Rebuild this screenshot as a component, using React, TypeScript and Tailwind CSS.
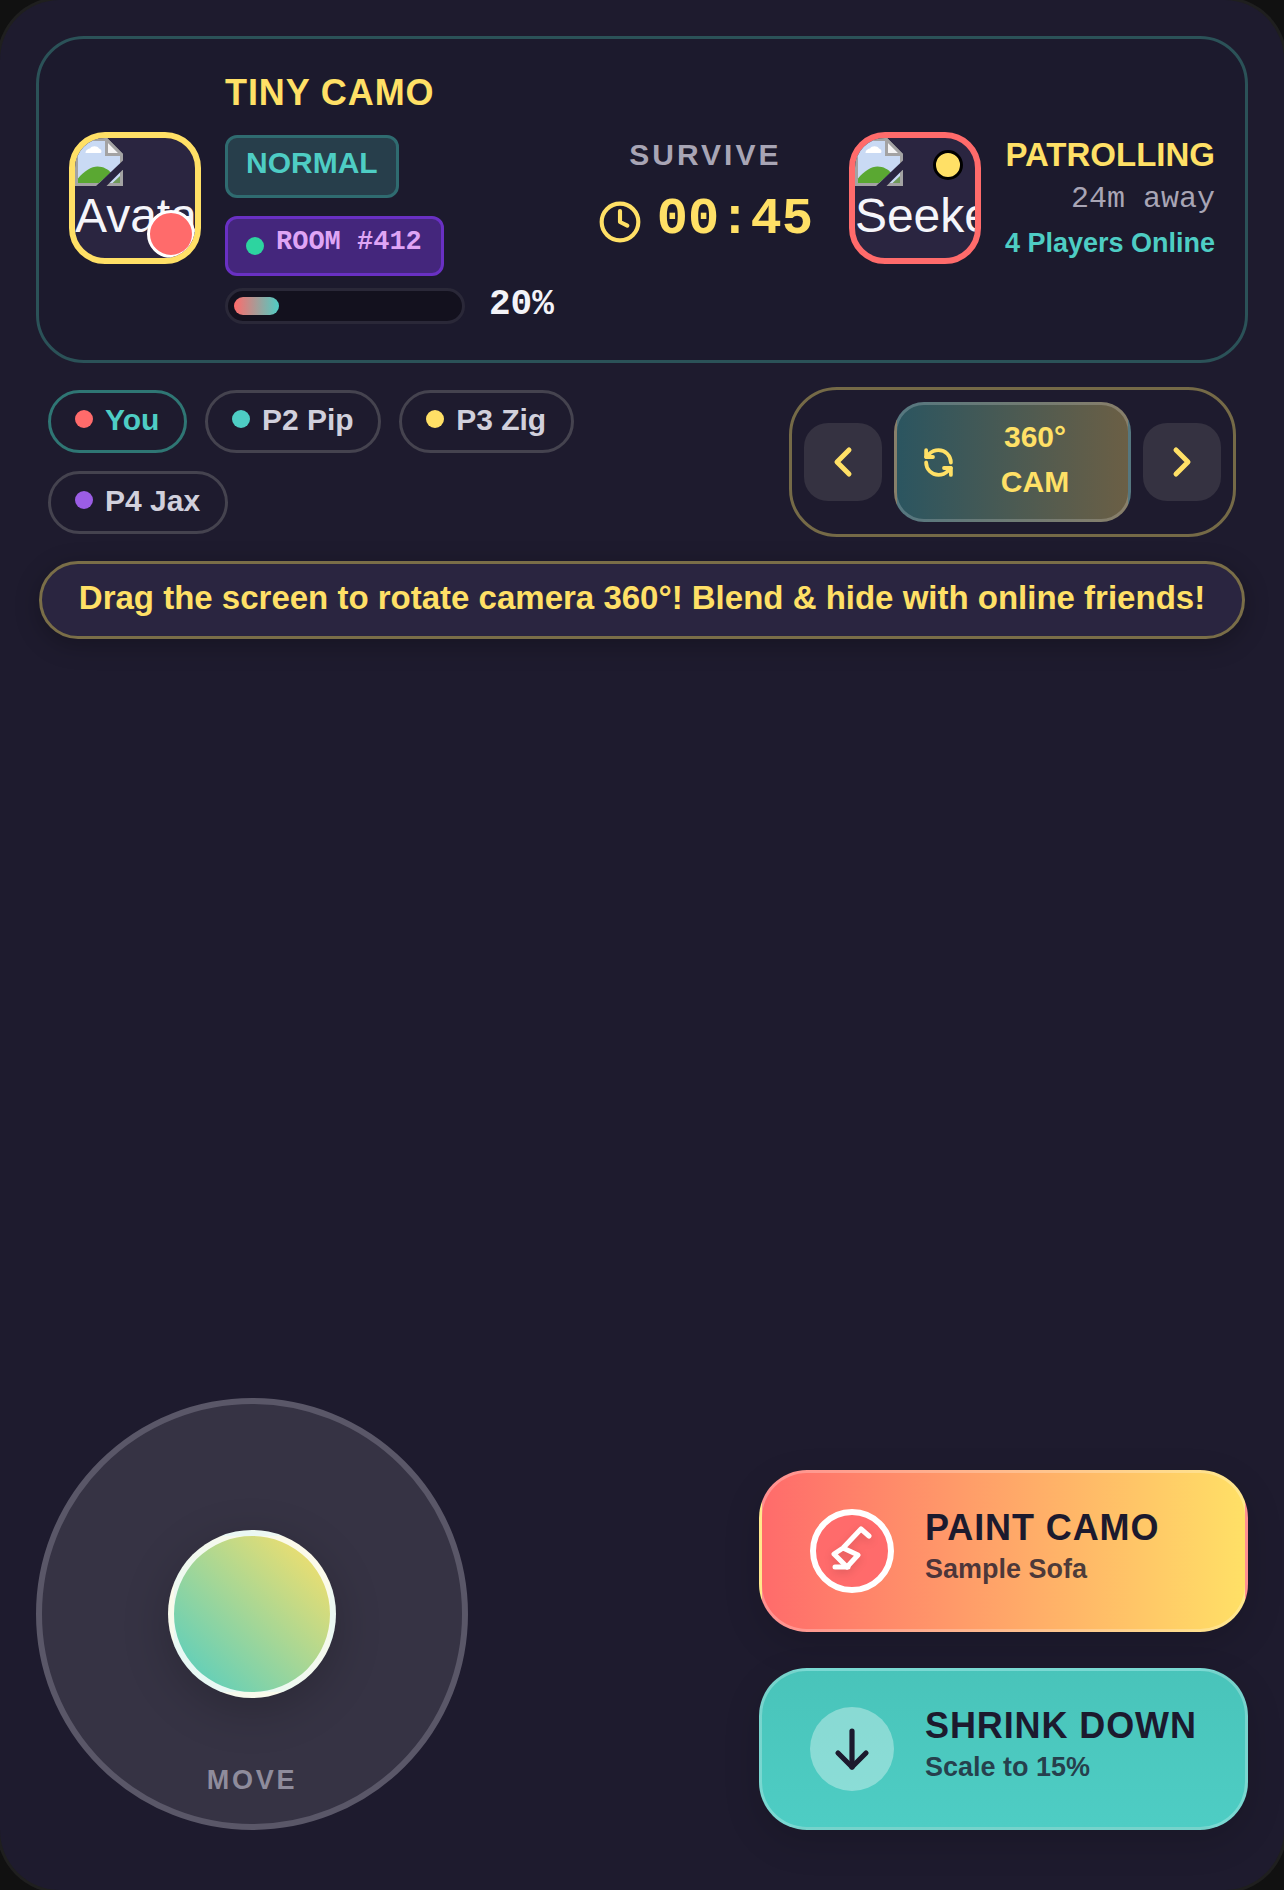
import React from "react";
import { ChevronLeft, ChevronRight, RefreshCcw, Clock } from "lucide-react";

const Broken = () => (
  <svg width="48" height="48" viewBox="0 0 16 16" className="block shrink-0">
    <path d="M0.5 0.500H10.500L15.500 5.500V15.500H0.500Z" fill="#c9daf4" stroke="#a3a3a3" />
    <path d="M10.500 0.500V5.500H15.500Z" fill="#f4f4f4" stroke="#a3a3a3" />
    <path d="M3.500 5C3.500 4 4.500 3.500 5 3.500C5.500 2.500 7.500 2.500 8 3.500C9 3.800 9 5 8.500 5Z" fill="#ffffff" />
    <path d="M1 15V13.500C3 11 5.500 9.500 7.500 9.500C9.500 9.500 11 10.500 12 11.500L8 15Z" fill="#5aa832" />
    <path d="M6.500 16.500L16.500 7V10L10 16.500Z" fill="#2a2540" />
    <path d="M12.500 15L15 12.700V15Z" fill="#6f9a58" />
  </svg>
);

function Chip({ dot, label, active }: { dot: string; label: string; active?: boolean }) {
  return (
    <div className={`flex h-[63px] items-center gap-[12px] rounded-full border-[3px] pr-[24.5px] pb-[5px] pl-[24px] text-[30px] font-bold ${active ? "border-[#2f7674] text-[#4ecdc4]" : "border-[#45434f] text-[#d1d0dc]"}`}>
      <span className={`h-[18px] w-[18px] rounded-full ${active ? "bg-[#ff6b6b]" : dot}`} />
      <span>{label}</span>
    </div>
  );
}

const TEXT_DARK = "text-[#1c1a2e]";

export default function App() {
  return (
    <div className="h-[1890px] w-[1284px] overflow-hidden bg-[#111111] font-['Liberation_Sans',Arial,sans-serif]">
      <div className="flex h-full w-full flex-col justify-between rounded-[60px] bg-[#1e1b2e] p-[36px] pb-[60px] shadow-[0_0_0_3px_#1f1f1f]">
        <div className="flex flex-col">
          <div className="flex h-[327px] items-center justify-between rounded-[48px] border-[3px] border-[#2b5258] bg-[#1c1a2d] px-[30px] pb-[3px]">
            <div className="flex items-center gap-[24px]">
              <div className="relative h-[132px] w-[132px] shrink-0 overflow-hidden rounded-[36px] border-[6px] border-[#ffe066] bg-[#2a2540] text-[48px] leading-[55px] text-[#f5f5fa]">
                <Broken />
                <div className="mt-[2px] whitespace-nowrap">Avatar</div>
                <span className="absolute right-0 bottom-0 h-[48px] w-[48px] rounded-full border-[3px] border-white bg-[#ff6b6b]" />
              </div>
              <div className="flex flex-col items-start">
                <div className="mb-[22px] text-[36px] leading-[41px] font-bold tracking-[0.9px] text-[#ffe066]">TINY CAMO</div>
                <div className="mb-[18px] flex h-[63px] items-center rounded-[12px] border-[3px] border-[#2f6b70] bg-[#273e4b] px-[18px] pb-[8px] text-[30px] font-bold text-[#4ecdc4]">NORMAL</div>
                <div className="mb-[12px] flex h-[60px] w-[219px] items-center gap-[12px] rounded-[12px] border-[3px] border-[#6930c3] bg-[#44267c] px-[18px]">
                  <span className="h-[18px] w-[18px] rounded-full bg-[#2dd4a0]" />
                  <span className="mb-[8px] font-['Liberation_Mono',monospace] text-[27px] font-bold whitespace-nowrap text-[#dfa5f5]">ROOM #412</span>
                </div>
                <div className="flex h-[36px] items-center gap-[24px]">
                  <div className="h-[36px] w-[240px] rounded-full border-[3px] border-[#2a2838] bg-[#13111e] p-[6px]">
                    <div className="h-[18px] w-[45px] rounded-full bg-[linear-gradient(to_right,#ff6b6b,#4ecdc4)]" />
                  </div>
                  <span className="mb-[2px] font-['Liberation_Mono',monospace] text-[36px] leading-[36px] font-bold text-[#f3f3f8]">20%</span>
                </div>
              </div>
            </div>

            <div className="ml-[8px] flex flex-col items-center pb-[8px]">
              <div className="mb-[16px] text-[30px] leading-[36px] font-bold tracking-[3px] text-[#a8a5b5]">SURVIVE</div>
              <div className="flex items-center gap-[15px]">
                <Clock size={44} strokeWidth={2.25} className="mt-[4px] text-[#ffe066]" />
                <span className="font-['Liberation_Mono',monospace] text-[52px] leading-[62px] font-bold text-[#ffe066]">00:45</span>
              </div>
            </div>

            <div className="flex items-center gap-[24px]">
              <div className="relative h-[132px] w-[132px] shrink-0 overflow-hidden rounded-[36px] border-[6px] border-[#ff6b6b] bg-[#2a2540] text-[48px] leading-[55px] text-[#f5f5fa]">
                <Broken />
                <div className="mt-[2px] whitespace-nowrap">Seeker</div>
                <span className="absolute top-[12px] right-[12px] h-[30px] w-[30px] rounded-full border-[3px] border-black bg-[#ffe066]" />
              </div>
              <div className="flex flex-col items-end pb-[2px]">
                <div className="text-[33px] leading-[38px] font-bold text-[#ffe066]">PATROLLING</div>
                <div className="mt-[8px] font-['Liberation_Mono',monospace] text-[30px] leading-[34px] text-[#a8a5b5]">24m away</div>
                <div className="mt-[12px] text-[27px] leading-[31px] font-bold text-[#4ecdc4]">4 Players Online</div>
              </div>
            </div>
          </div>

          <div className="mt-[24px] flex items-center justify-between px-[12px]">
            <div className="flex w-[540px] flex-wrap gap-[18px]">
              <Chip dot="bg-[#ff6b6b]" label="You" active />
              <Chip dot="bg-[#4ecdc4]" label="P2 Pip" />
              <Chip dot="bg-[#ffe066]" label="P3 Zig" />
              <Chip dot="bg-[#9b5de5]" label="P4 Jax" />
            </div>
            <div className="flex items-center gap-[12px] rounded-[48px] border-[3px] border-[#756a47] p-[12px]">
              <div className="flex h-[78px] w-[78px] items-center justify-center rounded-[24px] bg-[#353241] text-[#ffe066]">
                <ChevronLeft size={48} strokeWidth={2.5} />
              </div>
              <div className="flex h-[120px] w-[237px] items-center gap-[12px] rounded-[30px] border-[3px] border-white/20 bg-[linear-gradient(to_right,#2b5560,#6b5f45)] px-[25px] text-[#ffe066]">
                <RefreshCcw size={33} strokeWidth={2.75} className="shrink-0" />
                <span className="mb-[6px] flex-1 text-center text-[30px] leading-[45px] font-bold">360° CAM</span>
              </div>
              <div className="flex h-[78px] w-[78px] items-center justify-center rounded-[24px] bg-[#353241] text-[#ffe066]">
                <ChevronRight size={48} strokeWidth={2.5} />
              </div>
            </div>
          </div>

          <div className="mx-auto mt-[24px] flex h-[78px] w-[1206px] items-center justify-center rounded-full border-[3px] border-[#7a6e48] bg-[#2a2540] pb-[5px] text-[33px] font-bold whitespace-nowrap text-[#ffe066] shadow-[0_6px_24px_rgba(0,0,0,0.25)]">
            Drag the screen to rotate camera 360°! Blend &amp; hide with online friends!
          </div>
        </div>

        <div className="flex items-end justify-between">
          <div className="relative flex h-[432px] w-[432px] items-center justify-center rounded-full border-[6px] border-[#5a5768] bg-[#363344]">
            <div className="h-[168px] w-[168px] rounded-full border-[6px] border-white/85 bg-[linear-gradient(to_top_right,#4ecdc4,#ffe066)] shadow-[0_12px_48px_rgba(0,0,0,0.2)]" />
            <span className="absolute bottom-[28px] left-0 w-full text-center text-[27px] leading-[31px] font-bold tracking-[2.7px] text-[#8f8c9c]">MOVE</span>
          </div>
          <div className="flex w-[489px] flex-col gap-[36px]">
            <div className="flex h-[162px] items-center gap-[31px] rounded-[48px] border-[3px] border-white/25 bg-[linear-gradient(to_right,#ff6b6b,#ffe066)] px-[48px] shadow-[0_12px_36px_rgba(0,0,0,0.15)]">
              <div className="flex h-[84px] w-[84px] shrink-0 items-center justify-center rounded-full border-[6px] border-white bg-[#ff6b6b] text-white">
                <svg width="72" height="72" viewBox="0 0 72 72" fill="none" stroke="currentColor" strokeWidth="5" strokeLinecap="round" strokeLinejoin="round" className="drop-shadow-[0_3px_4px_rgba(0,0,0,0.12)]">
                  <path d="M53 21L45 14L27 33L18 39L31 52L42 40L27 33" />
                  <path d="M19 52H32" />
                </svg>
              </div>
              <div className="mb-[11px] flex flex-col">
                <span className={`text-[36px] leading-[42px] font-bold tracking-[0.9px] whitespace-nowrap ${TEXT_DARK}`}>PAINT CAMO</span>
                <span className="mt-[5px] text-[27px] leading-[31px] font-bold text-[#1c1a2e]/80">Sample Sofa</span>
              </div>
            </div>
            <div className="flex h-[162px] items-center gap-[31px] rounded-[48px] border-[3px] border-white/25 bg-[linear-gradient(to_bottom,#49c4ba,#4ecdc4)] px-[48px] shadow-[0_12px_36px_rgba(0,0,0,0.15)]">
              <div className={`flex h-[84px] w-[84px] shrink-0 items-center justify-center rounded-full bg-white/35 ${TEXT_DARK}`}>
                <svg width="48" height="48" viewBox="0 0 24 24" fill="none" stroke="currentColor" strokeWidth="2.6" strokeLinecap="round" strokeLinejoin="round">
                  <path d="M12 3V21" />
                  <path d="M5 14L12 21L19 14" />
                </svg>
              </div>
              <div className="mb-[11px] flex flex-col">
                <span className={`text-[36px] leading-[42px] font-bold tracking-[0.9px] whitespace-nowrap ${TEXT_DARK}`}>SHRINK DOWN</span>
                <span className="mt-[5px] text-[27px] leading-[31px] font-bold text-[#1c1a2e]/80">Scale to 15%</span>
              </div>
            </div>
          </div>
        </div>
      </div>
    </div>
  );
}
